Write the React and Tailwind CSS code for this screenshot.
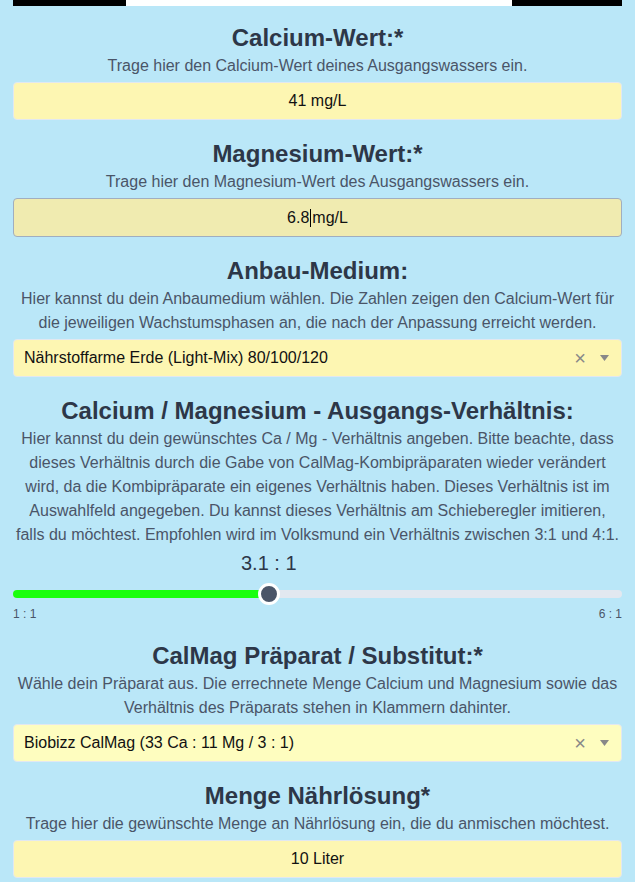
import { useState } from 'react'

const FONT = { fontFamily: '"Liberation Sans", Arial, sans-serif' }

function Heading({ children }) {
  return <h2 className="text-2xl leading-8 font-bold text-[#2d3748] text-center">{children}</h2>
}

function Desc({ children }) {
  return <p className="text-base leading-6 text-[#4a5568] text-center">{children}</p>
}

function SelectBox({ value, bg = 'bg-[#fdf6b2]' }) {
  return (
    <div className={`mt-1 h-[38px] ${bg} border border-[#e2e8f0] rounded flex items-center pl-2.5 pr-3 text-base text-[#111]`}>
      <span className="flex-1 truncate">{value}</span>
      <span className="text-[#888] text-xl leading-none mr-3.5 font-light">×</span>
      <svg width="9" height="6" viewBox="0 0 9 6" className="fill-[#888]">
        <path d="M0 0h9L4.5 6z" />
      </svg>
    </div>
  )
}

export default function App() {
  const [ratio] = useState(3.1)
  const pct = ((ratio - 1) / 5) * 100

  return (
    <div className="min-h-screen bg-[#bae7f8] pb-6" style={FONT}>

      {/* ── Banner bottom edge ── */}
      <div className="mx-[13px] flex h-1.5">
        <div className="w-[113px] bg-black" />
        <div className="flex-1 bg-white" />
        <div className="w-[110px] bg-black" />
      </div>

      <div className="px-[13px] pt-4 flex flex-col gap-[18px]">

        {/* ── Calcium ── */}
        <section>
          <Heading>Calcium-Wert:*</Heading>
          <Desc>Trage hier den Calcium-Wert deines Ausgangswassers ein.</Desc>
          <div className="mt-1 h-[38px] bg-[#fdf6b2] border border-[#e2e8f0] rounded flex items-center justify-center text-base text-[#111]">
            41 mg/L
          </div>
        </section>

        {/* ── Magnesium ── */}
        <section>
          <Heading>Magnesium-Wert:*</Heading>
          <Desc>Trage hier den Magnesium-Wert des Ausgangswassers ein.</Desc>
          <div className="mt-1 h-[39px] bg-[#f0ebb0] border border-[#a0aec0] rounded flex items-center justify-center text-base text-[#111]">
            6.8<span className="inline-block w-px h-[18px] bg-black mx-px" />mg/L
          </div>
        </section>

        {/* ── Anbau-Medium ── */}
        <section>
          <Heading>Anbau-Medium:</Heading>
          <Desc>
            Hier kannst du dein Anbaumedium wählen. Die Zahlen zeigen den Calcium-Wert für
            die jeweiligen Wachstumsphasen an, die nach der Anpassung erreicht werden.
          </Desc>
          <SelectBox value="Nährstoffarme Erde (Light-Mix) 80/100/120" />
        </section>

        {/* ── Ca / Mg Verhältnis ── */}
        <section>
          <Heading>Calcium / Magnesium - Ausgangs-Verhältnis:</Heading>
          <Desc>
            Hier kannst du dein gewünschtes Ca / Mg - Verhältnis angeben. Bitte beachte, dass
            dieses Verhältnis durch die Gabe von CalMag-Kombipräparaten wieder verändert
            wird, da die Kombipräparate ein eigenes Verhältnis haben. Dieses Verhältnis ist im
            Auswahlfeld angegeben. Du kannst dieses Verhältnis am Schieberegler imitieren,
            falls du möchtest. Empfohlen wird im Volksmund ein Verhältnis zwischen 3:1 und 4:1.
          </Desc>
          <div className="relative pt-[32px] mt-1">
            <span
              className="absolute top-0 -translate-x-1/2 text-xl leading-6 text-[#2d3748] whitespace-nowrap"
              style={{ left: `${pct}%` }}
            >
              {ratio.toFixed(1)} : 1
            </span>
            <div className="relative h-[22px] flex items-center">
              <div className="w-full h-2 rounded-full bg-[#e2e8f0]">
                <div className="h-2 rounded-full bg-[#1aff0f]" style={{ width: `${pct}%` }} />
              </div>
              <div
                className="absolute w-[22px] h-[22px] -translate-x-1/2 rounded-full bg-[#4a5568] border-[3px] border-white"
                style={{ left: `${pct}%` }}
              />
            </div>
            <div className="flex justify-between text-xs leading-4 text-[#4a5568] mt-px">
              <span>1 : 1</span>
              <span>6 : 1</span>
            </div>
          </div>
        </section>

        {/* ── CalMag Präparat ── */}
        <section>
          <Heading>CalMag Präparat / Substitut:*</Heading>
          <Desc>
            Wähle dein Präparat aus. Die errechnete Menge Calcium und Magnesium sowie das
            Verhältnis des Präparats stehen in Klammern dahinter.
          </Desc>
          <SelectBox value="Biobizz CalMag (33 Ca : 11 Mg / 3 : 1)" bg="bg-[#fefdbf]" />
        </section>

        {/* ── Menge ── */}
        <section>
          <Heading>Menge Nährlösung*</Heading>
          <Desc>Trage hier die gewünschte Menge an Nährlösung ein, die du anmischen möchtest.</Desc>
          <div className="mt-1 h-[38px] bg-[#fdf6b2] border border-[#e2e8f0] rounded flex items-center justify-center text-base text-[#111]">
            10 Liter
          </div>
        </section>

      </div>
    </div>
  )
}
